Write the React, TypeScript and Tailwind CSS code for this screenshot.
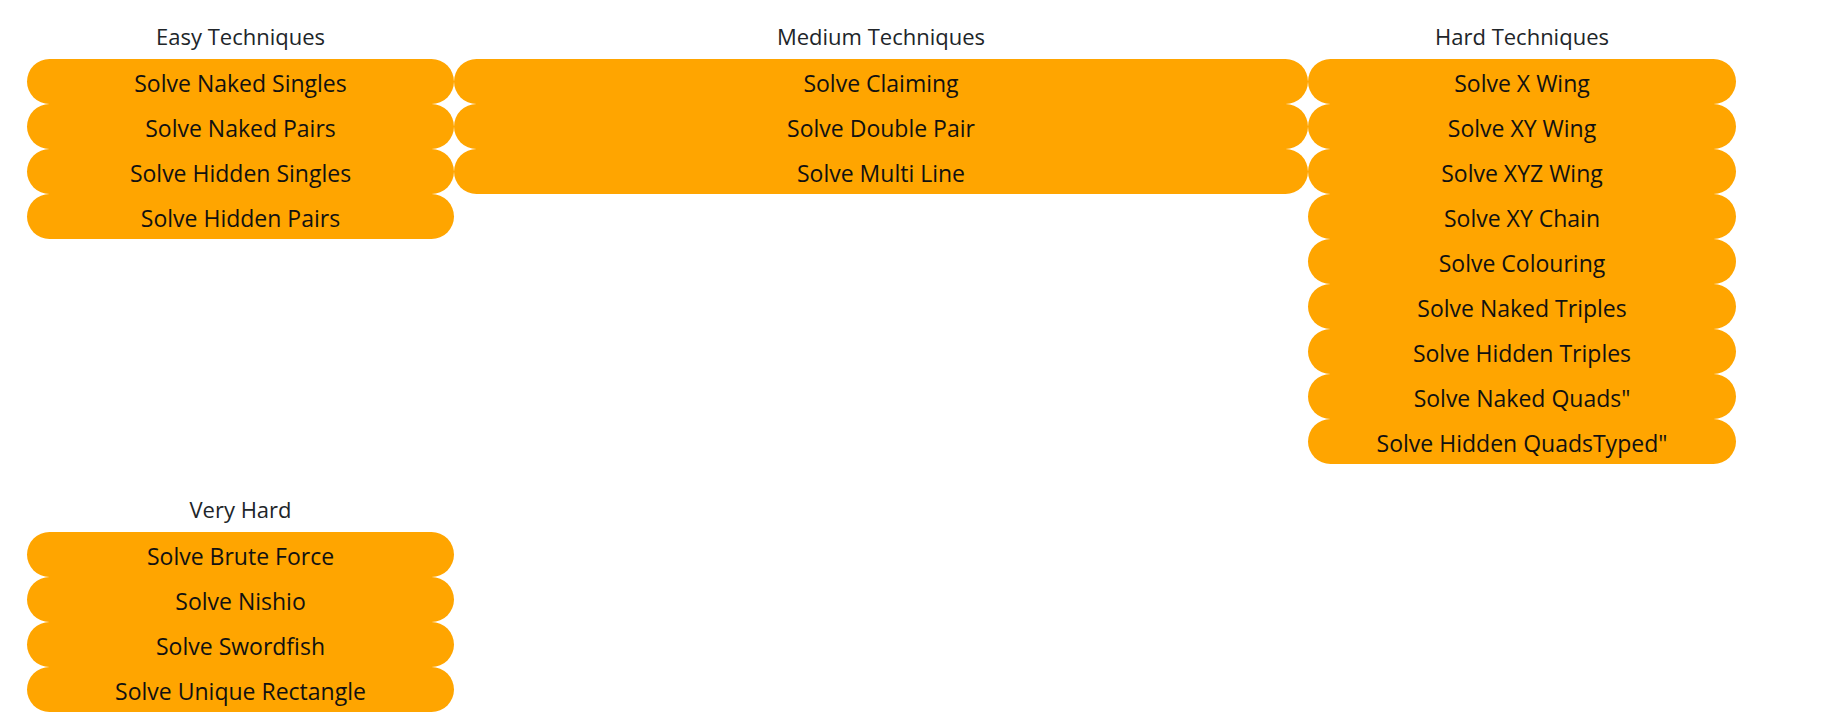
const easy = ["Solve Naked Singles", "Solve Naked Pairs", "Solve Hidden Singles", "Solve Hidden Pairs"];
const medium = ["Solve Claiming", "Solve Double Pair", "Solve Multi Line"];
const hard = [
  "Solve X Wing",
  "Solve XY Wing",
  "Solve XYZ Wing",
  "Solve XY Chain",
  "Solve Colouring",
  "Solve Naked Triples",
  "Solve Hidden Triples",
  'Solve Naked Quads"',
  'Solve Hidden QuadsTyped"',
];
const veryHard = ["Solve Brute Force", "Solve Nishio", "Solve Swordfish", "Solve Unique Rectangle"];

function Group({ title, items }: { title: string; items: string[] }) {
  return (
    <div className="flex flex-col">
      <div className="pt-[22px] pb-[9px] text-center text-[22px] leading-[28px] text-[#212529]">{title}</div>
      {items.map((label) => (
        <button
          key={label}
          type="button"
          className="flex h-[45px] items-center justify-center rounded-full bg-[#ffa500] pt-[3px] text-[23px] text-[#111]"
        >
          {label}
        </button>
      ))}
    </div>
  );
}

export default function App() {
  return (
    <div className="min-h-screen bg-white pl-[27px] font-['Open_Sans',sans-serif]">
      <div className="grid grid-cols-[427px_854px_428px] items-start gap-y-[9px]">
        <Group title="Easy Techniques" items={easy} />
        <Group title="Medium Techniques" items={medium} />
        <Group title="Hard Techniques" items={hard} />
        <Group title="Very Hard" items={veryHard} />
      </div>
    </div>
  );
}
